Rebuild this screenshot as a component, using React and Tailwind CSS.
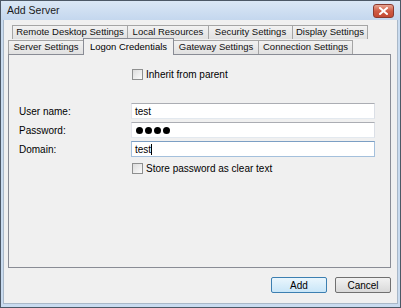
import React from "react";

const font = { fontFamily: '"Liberation Sans", Arial, sans-serif' };

function Tab({ w, children, selected }) {
  if (selected) {
    return (
      <div
        className="relative z-10 -mb-px -ml-px h-[17px] flex items-center justify-center border border-b-0 border-[#898c95] bg-[#f0f0f0] text-[9.5px] text-black"
        style={{ width: w }}
      >
        {children}
      </div>
    );
  }
  return (
    <div
      className="h-[14px] flex items-center justify-center border border-b-0 border-[#a5a5a5] bg-linear-to-b from-[#f2f2f2] to-[#e1e1e1] text-[9.5px] text-[#111] -ml-px first:ml-0"
      style={{ width: w }}
    >
      {children}
    </div>
  );
}

function Checkbox() {
  return (
    <div className="w-[11px] h-[11px] border border-[#8e8f8f] bg-linear-to-br from-[#dcdcdc] to-[#fbfbfb] shrink-0" />
  );
}

function Input({ children, focused }) {
  return (
    <div
      className={`w-[244px] h-[16px] flex items-center pl-[3px] bg-white text-[10px] text-black border ${
        focused
          ? "border-[#a4c0dc] border-t-[#7c9fc4]"
          : "border-[#e3e9ef] border-t-[#abadb3] border-l-[#e2e3ea] border-r-[#dbdfe6]"
      }`}
    >
      {children}
    </div>
  );
}

export default function App() {
  return (
    <div
      className="w-[401px] h-[308px] flex flex-col border border-[#4c5866] bg-[#c9dbef]"
      style={font}
    >
      {/* title bar */}
      <div className="h-[19px] flex items-center justify-between pl-[6px] pr-[6px] bg-linear-to-b from-[#dae7f5] to-[#c4d7ee]">
        <span className="text-[10.5px] text-[#1a1a1a] pt-[1px]">Add Server</span>
        <div className="w-[21px] h-[14px] mt-[1px] rounded-[3px] border border-[#8a3a30] bg-linear-to-b from-[#e8a592] via-[#cf5b44] to-[#c44a33] flex items-center justify-center">
          <svg width="9" height="8" viewBox="0 0 9 8">
            <path d="M1 1 L8 7 M8 1 L1 7" stroke="white" strokeWidth="2" strokeLinecap="square" />
          </svg>
        </div>
      </div>
      {/* content */}
      <div className="flex-1 mx-[2px] mb-[3px] bg-[#f0f0f0] flex flex-col border border-[#a9b8c8] border-t-0">
        {/* tabs */}
        <div className="pl-[8px] pt-[5px] flex">
          <Tab w={116}>Remote Desktop Settings</Tab>
          <Tab w={82}>Local Resources</Tab>
          <Tab w={85}>Security Settings</Tab>
          <Tab w={76}>Display Settings</Tab>
        </div>
        <div className="pl-[4px] flex items-end -mt-[1px] relative">
          <Tab w={76}>Server Settings</Tab>
          <Tab w={91} selected>
            Logon Credentials
          </Tab>
          <Tab w={86}>Gateway Settings</Tab>
          <Tab w={95}>Connection Settings</Tab>
        </div>
        {/* panel */}
        <div className="ml-[4px] w-[383px] h-[214px] border border-[#898c95] bg-[#f0f0f0] flex flex-col text-[10px] text-black">
          <div className="mt-[12px] ml-[123px] flex items-center gap-[3px]">
            <Checkbox />
            <span>Inherit from parent</span>
          </div>
          <div className="mt-[21px] flex flex-col gap-[3px]">
            <div className="flex items-center">
              <span className="w-[122px] pl-[10px]">User name:</span>
              <Input>test</Input>
            </div>
            <div className="flex items-center">
              <span className="w-[122px] pl-[10px]">Password:</span>
              <Input>
                <div className="flex gap-[2px] pl-[1px]">
                  <span className="w-[7px] h-[7px] rounded-full bg-black" />
                  <span className="w-[7px] h-[7px] rounded-full bg-black" />
                  <span className="w-[7px] h-[7px] rounded-full bg-black" />
                  <span className="w-[7px] h-[7px] rounded-full bg-black" />
                </div>
              </Input>
            </div>
            <div className="flex items-center">
              <span className="w-[122px] pl-[10px]">Domain:</span>
              <Input focused>
                <span>test</span>
                <span className="w-px h-[11px] bg-black" />
              </Input>
            </div>
          </div>
          <div className="mt-[4px] ml-[123px] flex items-center gap-[3px]">
            <Checkbox />
            <span>Store password as clear text</span>
          </div>
        </div>
        {/* buttons */}
        <div className="mt-[9px] pr-[6px] flex justify-end gap-[8px]">
          <button className="w-[56px] h-[16px] rounded-[2px] border border-[#3c7fb1] bg-linear-to-b from-[#eaf6fd] to-[#c9e6f8] text-[10px] text-black flex items-center justify-center">
            Add
          </button>
          <button className="w-[56px] h-[16px] rounded-[2px] border border-[#707070] bg-linear-to-b from-[#f2f2f2] to-[#d9d9d9] text-[10px] text-black flex items-center justify-center">
            Cancel
          </button>
        </div>
      </div>
    </div>
  );
}
